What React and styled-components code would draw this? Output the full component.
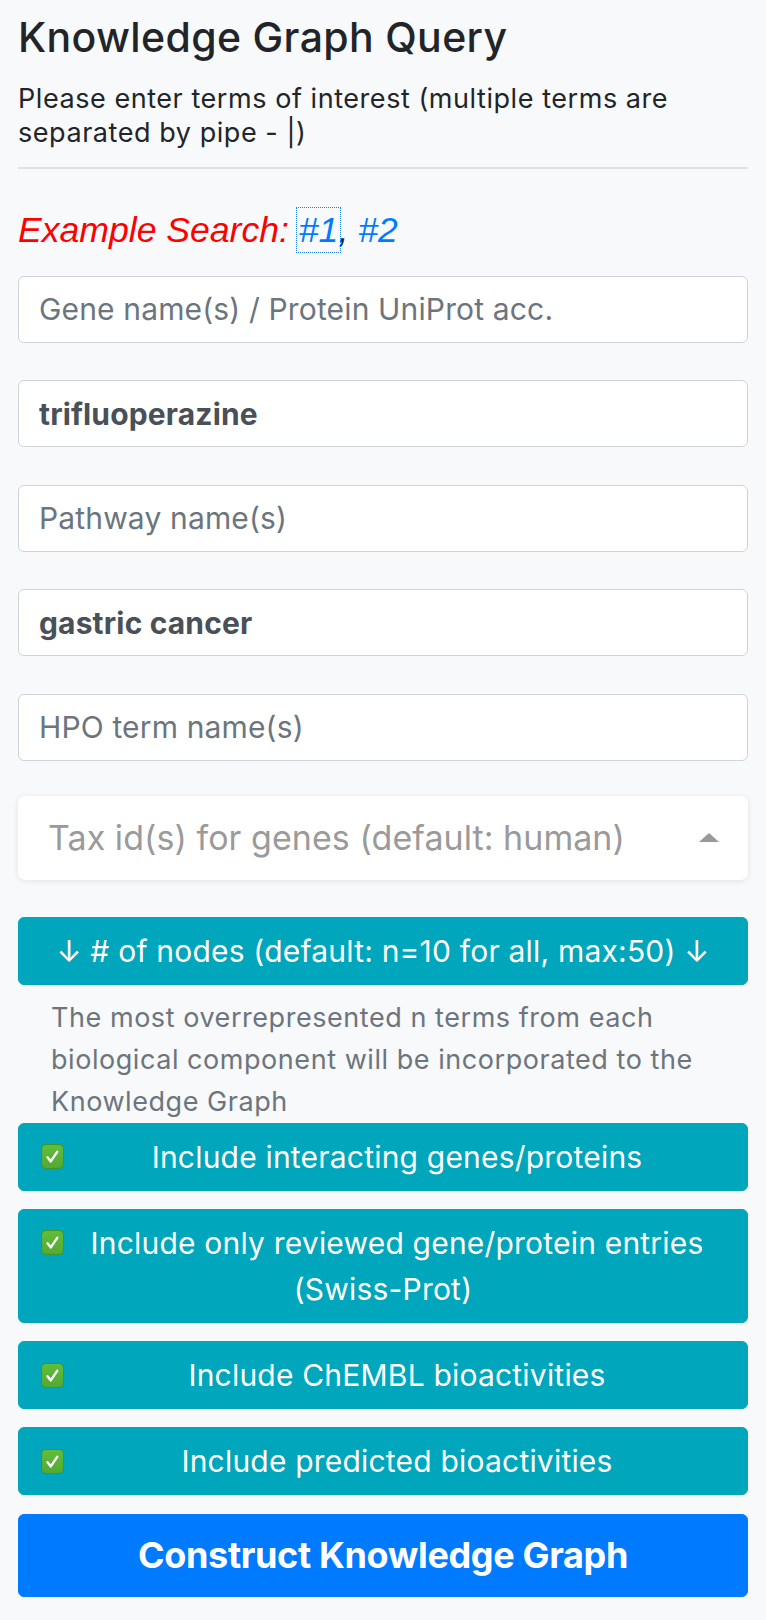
import React from "react";
import styled, { createGlobalStyle } from "styled-components";

const GlobalStyle = createGlobalStyle`
  html, body { margin: 0; padding: 0; background: #f8f9fa; }
  body { font-family: Inter, "Noto Sans", sans-serif; color: #212529; }
  * { box-sizing: border-box; }
`;

const Page = styled.main`
  display: flex;
  flex-direction: column;
  padding: 13px 18px 22px;
`;

const Title = styled.h1`
  margin: 0;
  font-size: 41px;
  line-height: 48px;
  font-weight: 500;
  letter-spacing: 0.35px;
  color: #212529;
`;

const Subtitle = styled.p`
  margin: 21px 0 0;
  font-size: 27px;
  line-height: 34px;
  letter-spacing: 0.55px;
  color: #212529;
`;

const Divider = styled.hr`
  margin: 17px 0 0;
  border: 0;
  border-top: 2px solid #e1e2e4;
`;

const ExampleLine = styled.div`
  margin-top: 41px;
  font-family: "Liberation Sans", Arial, sans-serif;
  font-style: italic;
  font-size: 35.6px;
  line-height: 40px;
  color: #212529;
`;

const ExampleLabel = styled.span`
  color: #ff0000;
`;

const ExampleLink = styled.a`
  color: #007bff;
  text-decoration: none;
  outline: ${(p) => (p.$focused ? "1.5px dotted #1a7ff0" : "none")};
  outline-offset: 2px;
`;

const Fields = styled.div`
  display: flex;
  flex-direction: column;
  gap: 37.6px;
  margin-top: 25.5px;
`;

const Input = styled.input`
  display: block;
  width: 100%;
  height: 67px;
  padding: 0 20px;
  border: 1px solid #ced4da;
  border-radius: 6px;
  background: #fff;
  font-family: Inter, "Noto Sans", sans-serif;
  font-size: 30px;
  font-weight: ${(p) => (p.$bold ? 700 : 400)};
  letter-spacing: 0.15px;
  color: #495057;
  outline: none;
  &::placeholder { color: #6c757d; opacity: 1; font-weight: 400; }
`;

const Select = styled.div`
  margin-top: 35px;
  height: 84px;
  display: flex;
  align-items: center;
  justify-content: space-between;
  padding: 0 29px 0 30px;
  background: #fff;
  border-radius: 7px;
  box-shadow: 0 1px 6px rgba(0, 0, 0, 0.09), 0 0 1px rgba(0, 0, 0, 0.05);
`;

const SelectPlaceholder = styled.span`
  font-size: 34px;
  letter-spacing: 0.05px;
  color: #9a9a9a;
`;

const Button = styled.button`
  display: block;
  width: 100%;
  border: 1px solid ${(p) => p.$bg};
  border-radius: 6px;
  background: ${(p) => p.$bg};
  color: #fff;
  font-family: Inter, "Noto Sans", sans-serif;
  text-align: center;
  cursor: pointer;
`;

const NodesButton = styled(Button)`
  margin-top: 36.7px;
  padding: 10px 22px;
  font-size: 30px;
  line-height: 46px;
  letter-spacing: 0.2px;
`;

const Description = styled.p`
  margin: 12px 33px 0;
  font-size: 27px;
  line-height: 42px;
  letter-spacing: 0.55px;
  color: #6c757d;
`;

const Options = styled.div`
  display: flex;
  flex-direction: column;
  gap: 18.3px;
`;

const OptionButton = styled(Button)`
  padding: 10px 22px;
  font-size: 30px;
  line-height: 46px;
  letter-spacing: 0.2px;
`;

const CheckFloat = styled.span`
  float: left;
  height: 46px;
  display: flex;
  align-items: center;
  margin-right: 5px;
`;

const SubmitButton = styled(Button)`
  margin-top: 18.6px;
  padding: 14px 22px;
  font-size: 36px;
  line-height: 53px;
  font-weight: 700;
  letter-spacing: -0.35px;
`;

function CheckIcon() {
  return (
    <svg width="23" height="25" viewBox="0 0 23 25" aria-hidden="true">
      <defs>
        <linearGradient id="cbg" x1="0" y1="0" x2="0" y2="1">
          <stop offset="0" stopColor="#62bd3c" />
          <stop offset="1" stopColor="#52a932" />
        </linearGradient>
      </defs>
      <rect x="0.5" y="0.5" width="22" height="24" rx="4.5" fill="url(#cbg)" stroke="#3f9628" />
      <path d="M6.5 13.2 L9.8 17.4 L16.2 7.8" fill="none" stroke="#fff" strokeWidth="2.4" strokeLinecap="round" strokeLinejoin="round" />
    </svg>
  );
}

function TriangleUp() {
  return (
    <svg width="20" height="9" viewBox="0 0 20 9" aria-hidden="true">
      <path d="M0 9 L10 0 L20 9 Z" fill="#999" />
    </svg>
  );
}

const options = [
  "Include interacting genes/proteins",
  "Include only reviewed gene/protein entries (Swiss-Prot)",
  "Include ChEMBL bioactivities",
  "Include predicted bioactivities",
];

export default function App() {
  return (
    <>
      <GlobalStyle />
      <Page>
        <Title>Knowledge Graph Query</Title>
        <Subtitle>Please enter terms of interest (multiple terms are separated by pipe - |)</Subtitle>
        <Divider />
        <ExampleLine>
          <ExampleLabel>Example Search: </ExampleLabel>
          <ExampleLink href="#" $focused>#1</ExampleLink>,{" "}
          <ExampleLink href="#">#2</ExampleLink>
        </ExampleLine>
        <Fields>
          <Input placeholder="Gene name(s) / Protein UniProt acc." />
          <Input $bold defaultValue="trifluoperazine" />
          <Input placeholder="Pathway name(s)" />
          <Input $bold defaultValue="gastric cancer" />
          <Input placeholder="HPO term name(s)" />
        </Fields>
        <Select>
          <SelectPlaceholder>Tax id(s) for genes (default: human)</SelectPlaceholder>
          <TriangleUp />
        </Select>
        <NodesButton $bg="#00a6bb">↓ # of nodes (default: n=10 for all, max:50) ↓</NodesButton>
        <Description>
          The most overrepresented n terms from each biological component will be incorporated to the Knowledge Graph
        </Description>
        <Options>
          {options.map((o) => (
            <OptionButton key={o} $bg="#00a6bb">
              <CheckFloat><CheckIcon /></CheckFloat>
              {o}
            </OptionButton>
          ))}
        </Options>
        <SubmitButton $bg="#007bff">Construct Knowledge Graph</SubmitButton>
      </Page>
    </>
  );
}
